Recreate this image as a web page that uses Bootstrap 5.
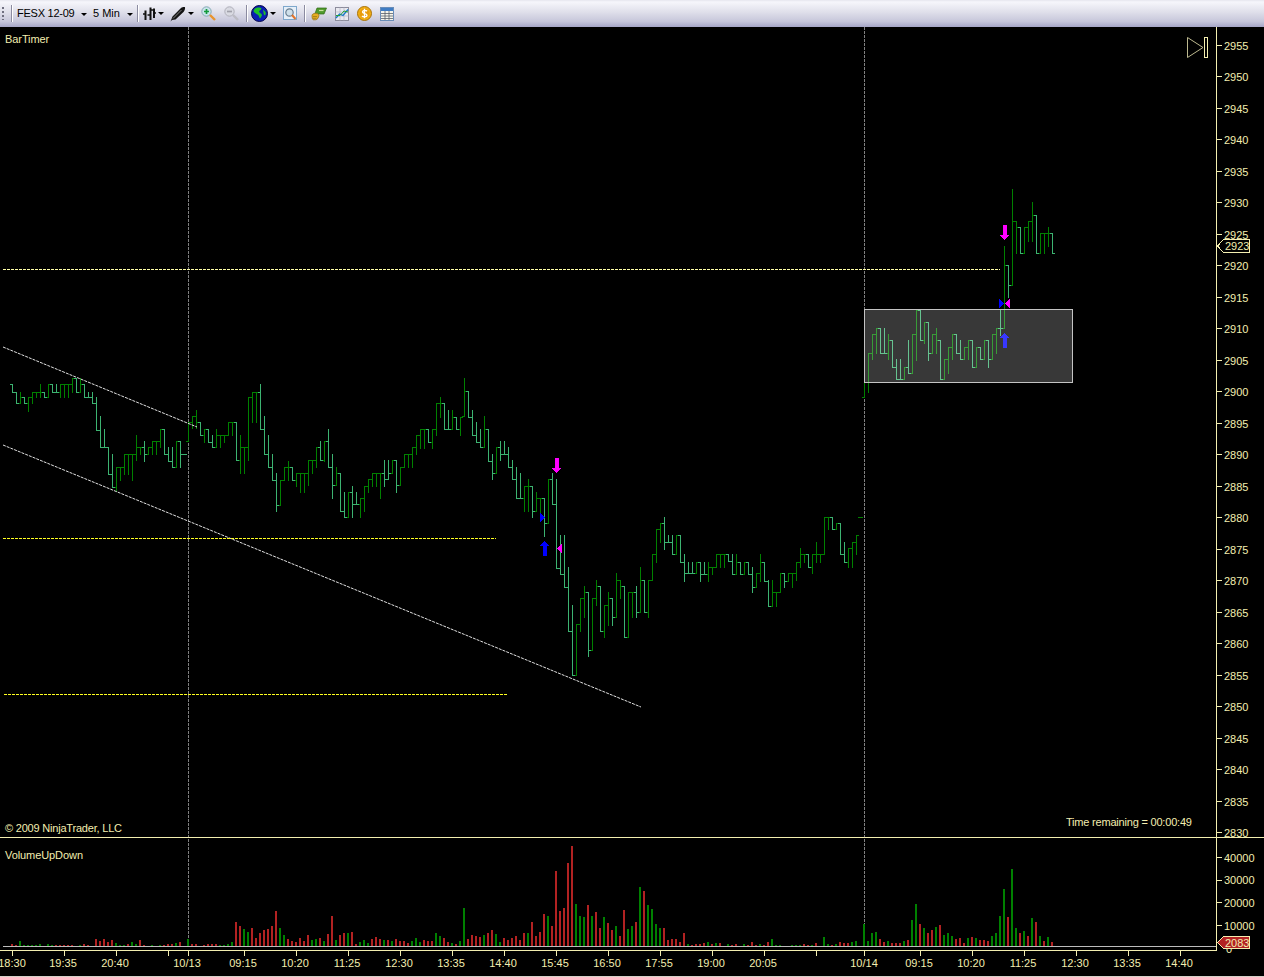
<!doctype html>
<html lang="en">
<head>
<meta charset="utf-8">
<title>FESX 12-09 chart</title>
<link href="https://cdn.jsdelivr.net/npm/bootstrap@5.3.0/dist/css/bootstrap.min.css" rel="stylesheet">
<style>
html,body{background:#000;height:977px;overflow:hidden;}
body{font-family:"Liberation Sans",Arial,sans-serif;}
.tbar{height:27px;padding:0;background:linear-gradient(#e6e6ee 0,#f6f6fb 2px,#dfdfea 45%,#c6c6da 80%,#a5a5c6 100%);flex-wrap:nowrap;justify-content:flex-start;font-size:11px;color:#000;}
.grip{width:2px;height:13px;margin-left:2px;background:repeating-linear-gradient(#6f6f80 0 2px,transparent 2px 4px);}
.tsep{width:1px;height:17px;background:#8b8ba0;border-right:1px solid #fff;box-sizing:content-box;}
.tsym{margin-left:4px;width:67px;white-space:nowrap;letter-spacing:-.25px;}
.tint{width:38px;white-space:nowrap;margin-left:9px;}
.tsym.dropdown-toggle::after,.tint.dropdown-toggle::after{margin-left:7px;vertical-align:1px;border-width:3px 3px 0 3px;}
.tcaret{width:0;height:0;border:3px solid transparent;border-top-color:#000;border-bottom:0;margin-left:2px;}
.tcaret.gap0{margin-left:1px;}
.tico{display:block;flex:none;}
.m2{margin-left:2px}.m3{margin-left:3px}.m4{margin-left:4px}.m5{margin-left:5px}.m6{margin-left:6px}.m7{margin-left:7px}.m8{margin-left:8px}
.chartbox{display:block;background:#000;}
.chartbox text{font-family:"Liberation Sans",Arial,sans-serif;font-size:11px;fill:#f3eeb0;}
.chartbox text.tight{letter-spacing:-.2px;}
.chartbox text.tight2{letter-spacing:-.08px;}
.foot{height:1px;background:#d4d0c8;}
</style>
</head>
<body>
<nav class="navbar d-flex align-items-center tbar">
  <span class="grip"></span>
  <span class="tsep m7"></span>
  <span class="tsym dropdown-toggle">FESX 12-09</span>
  <span class="tint dropdown-toggle">5 Min</span>
  <span class="tsep m6"></span>
  <svg class="tico m4" width="14" height="14" viewBox="0 0 14 14"><path d="M2.500 3.500V13M7.500 .5V13M11 1.500V11" stroke="#111" stroke-width="2" fill="none"/><path d="M0 7h3M4.500 8h3M7 3h3M10 6h3" stroke="#111" stroke-width="1.300" fill="none"/></svg>
  <span class="tcaret gap0"></span>
  <svg class="tico m6" width="16" height="16" viewBox="0 0 16 16"><path d="M.5 15.500 2.500 10.500 11 2c1.600-1.300 3.800-1.200 4-.8.400 1.500-.5 3.500-1.500 4.800L5.500 13.500 2 14Z" fill="#141414"/><path d="M3 12.500 11.500 4" stroke="#8a8a8a" stroke-width=".9"/></svg>
  <span class="tcaret"></span>
  <svg class="tico m7" width="16" height="16" viewBox="0 0 16 16"><circle cx="5.500" cy="5.500" r="4.700" fill="#c9e4ea" stroke="#86a8b6"/><path d="M3 5.500h5M5.500 3v5" stroke="#129a3c" stroke-width="1.700"/><path d="M9 9l5 5" stroke="#e8942e" stroke-width="2.400"/></svg>
  <svg class="tico m7" width="16" height="16" viewBox="0 0 16 16"><circle cx="5.500" cy="5.500" r="4.700" fill="#d9dae2" stroke="#b0b0ba"/><path d="M3 5.500h5" stroke="#a0a0aa" stroke-width="1.700"/><path d="M9 9l5 5" stroke="#bcbcc4" stroke-width="2.400"/></svg>
  <span class="tsep m6"></span>
  <svg class="tico m3" width="17" height="17" viewBox="0 0 17 17"><circle cx="8.500" cy="8.500" r="8" fill="#0a1fb4" stroke="#05054a"/><path d="M3.500 4C5.500 2 9 2 10.500 3.500c-.5 2-2 1.500-2.500 3 .5 2 2.500 1.500 3 3.500-.5 2-1.500 3-2 3.500-1-1.500-1-3-2.500-4C4.500 8.500 2.500 7 2.500 6ZM12 4.500l2.500 2.500c.5 1 0 3-.500 3.500-1-.5-1.500-1.500-1.500-3Z" fill="#1fc12a"/></svg>
  <span class="tcaret"></span>
  <svg class="tico m7" width="14" height="15" viewBox="0 0 14 15"><rect x=".5" y=".5" width="13" height="13" fill="#e6eff8" stroke="#7fa8cc"/><circle cx="6.500" cy="6.500" r="3.700" fill="#cfe0ea" stroke="#6a7f92" stroke-width="1.200"/><path d="M9 9l3.500 4" stroke="#e2752b" stroke-width="2"/></svg>
  <span class="tsep m7"></span>
  <svg class="tico m5" width="16" height="15" viewBox="0 0 16 15"><path d="M4 7.500 6 2h9.500L13 8H8Z" fill="#4f9a2c" stroke="#2f6a16" stroke-width=".7"/><path d="M8 4.500h4.500" stroke="#c9e29a" stroke-width="1.200"/><path d="M1 9.500c0-1.200 1.500-2.200 3.500-2.200h2l1.500 2c-.5 2.500-1.500 4.500-3.500 4.500H2.500C1.200 13.800 1 11 1 9.500Z" fill="#e5ad22" stroke="#8f6a0e" stroke-width=".7"/><path d="M2 10.500h4M2 12.300h3.500" stroke="#9a7410" stroke-width=".7"/></svg>
  <svg class="tico m8" width="14" height="14" viewBox="0 0 14 14"><rect x=".5" y=".5" width="13" height="13" fill="#e9e9f0" stroke="#8c8c9c"/><path d="M.5 5h13M.5 9h13M5 .5v13M9 .5v13" stroke="#b9b9c6" stroke-width=".7"/><path d="M1 11 4.500 7 8 8.500 13 2.500" stroke="#1778c8" stroke-width="1.300" fill="none"/><path d="M1 8.500 5 8.500 9 4 13 5" stroke="#25a038" fill="none"/></svg>
  <svg class="tico m8" width="15" height="15" viewBox="0 0 15 15"><circle cx="7.500" cy="7.500" r="7" fill="#f0ae14" stroke="#a9720a"/><circle cx="7.500" cy="7.500" r="4.900" fill="#e89c0c"/><path d="M10 5.200c-1-1.200-4.500-1.200-4.500.7S10 7.600 10 9.400 6 11.300 5 10M7.500 2.800v9.400" stroke="#fff" stroke-width="1.400" fill="none"/></svg>
  <svg class="tico m8" width="14" height="14" viewBox="0 0 14 14"><rect x=".5" y=".5" width="13" height="13" fill="#f7f6ec" stroke="#6a8db8"/><rect x="1" y="1" width="12" height="3" fill="#3f7cc4"/><path d="M1 6.500h12M1 9h12M1 11.500h12M5 4v9M9 4v9" stroke="#585f6a" stroke-width=".8"/></svg>
</nav>
<svg class="chartbox" id="chart" width="1264" height="949" viewBox="0 27 1264 949" xmlns="http://www.w3.org/2000/svg">
  <g id="grid" shape-rendering="crispEdges">
    <path d="M188.500 27V946M864.500 27V946" stroke="#808080" stroke-dasharray="3 1" fill="none"/>
  </g>
  <g id="bars" shape-rendering="crispEdges" fill="none"></g>
  <g id="marks" shape-rendering="crispEdges"></g>
  <rect x="864.500" y="309.500" width="208" height="73" fill="#fff" fill-opacity=".22" stroke="#c4c4c4" shape-rendering="crispEdges"/>
  <g fill="none" stroke-dasharray="3 1" stroke-width="1">
    <path d="M3 347 197 427M3 445 641 707" stroke="#e0e0e0"/>
    <path d="M3 538.500H496M4 694.500H507" stroke="#ffff20" shape-rendering="crispEdges"/>
    <path d="M3 269.500H1000" stroke="#ffffa8" shape-rendering="crispEdges"/>
  </g>
  <g id="vol" shape-rendering="crispEdges"></g>
  <g fill="none" stroke="#f3eeb0" shape-rendering="crispEdges">
    <path d="M1216.500 27V950.500M0 837.500H1264M0 950.500H1216.500"/>
    <path d="M1217 45.500h5M1217 76.500h5M1217 108.500h5M1217 139.500h5M1217 171.500h5M1217 202.500h5M1217 234.500h5M1217 265.500h5M1217 297.500h5M1217 328.500h5M1217 360.500h5M1217 391.500h5M1217 423.500h5M1217 454.500h5M1217 486.500h5M1217 517.500h5M1217 549.500h5M1217 580.500h5M1217 612.500h5M1217 643.500h5M1217 675.500h5M1217 706.500h5M1217 738.500h5M1217 769.500h5M1217 801.500h5M1217 832.500h5"/>
    <path d="M1217 857.500h5M1217 880.500h5M1217 902.500h5M1217 925.500h5"/>
    <path d="M12.500 950v6M64.500 950v6M116.500 950v6M168.500 950v6M188.500 950v6M244.500 950v6M296.500 950v6M348.500 950v6M400.500 950v6M452.500 950v6M504.500 950v6M556.500 950v6M608.500 950v6M660.500 950v6M712.500 950v6M764.500 950v6M816.500 950v6M864.500 950v6M920.500 950v6M972.500 950v6M1024.500 950v6M1076.500 950v6M1128.500 950v6M1180.500 950v6"/>
  </g>
  <path d="M3 946.500H1216" stroke="#bcbcbc" shape-rendering="crispEdges"/>
  <text x="5" y="43" class="tight2">BarTimer</text>
  <text x="5" y="832" class="tight">© 2009 NinjaTrader, LLC</text>
  <text x="5" y="859" class="tight2">VolumeUpDown</text>
  <text x="1066" y="826" class="tight">Time remaining = 00:00:49</text>
  <path d="M1187.500 37.500V57.500L1203 47.500Z" fill="none" stroke="#bdb98f"/>
  <rect x="1204.500" y="37.500" width="3" height="19.500" fill="none" stroke="#f3eeb0" shape-rendering="crispEdges"/>
  <g id="ylab">
    <text x="1224" y="50">2955</text><text x="1224" y="81">2950</text><text x="1224" y="113">2945</text><text x="1224" y="144">2940</text><text x="1224" y="176">2935</text><text x="1224" y="207">2930</text><text x="1224" y="239">2925</text><text x="1224" y="270">2920</text><text x="1224" y="302">2915</text><text x="1224" y="333">2910</text><text x="1224" y="365">2905</text><text x="1224" y="396">2900</text><text x="1224" y="428">2895</text><text x="1224" y="459">2890</text><text x="1224" y="491">2885</text><text x="1224" y="522">2880</text><text x="1224" y="554">2875</text><text x="1224" y="585">2870</text><text x="1224" y="617">2865</text><text x="1224" y="648">2860</text><text x="1224" y="680">2855</text><text x="1224" y="711">2850</text><text x="1224" y="743">2845</text><text x="1224" y="774">2840</text><text x="1224" y="806">2835</text><text x="1224" y="837">2830</text>
    <text x="1224" y="862">40000</text><text x="1224" y="884">30000</text><text x="1224" y="907">20000</text><text x="1224" y="930">10000</text><text x="1226" y="953">0</text>
  </g>
  <path d="M1217.500 246 1223.500 239.500H1249.500V252.500H1223.500Z" fill="#000" stroke="#f3eeb0" shape-rendering="crispEdges"/>
  <text x="1225" y="250">2923</text>
  <path d="M1217.500 942.500 1223.500 936.500H1249.500V948.500H1223.500Z" fill="#b22222" stroke="#f3eeb0" shape-rendering="crispEdges"/>
  <text x="1225" y="947">2083</text>
  <g id="xlab" text-anchor="middle">
    <text x="12" y="967">18:30</text><text x="63" y="967">19:35</text><text x="115" y="967">20:40</text><text x="187" y="967">10/13</text><text x="243" y="967">09:15</text><text x="295" y="967">10:20</text><text x="347" y="967">11:25</text><text x="399" y="967">12:30</text><text x="451" y="967">13:35</text><text x="503" y="967">14:40</text><text x="555" y="967">15:45</text><text x="607" y="967">16:50</text><text x="659" y="967">17:55</text><text x="711" y="967">19:00</text><text x="763" y="967">20:05</text><text x="864" y="967">10/14</text><text x="919" y="967">09:15</text><text x="971" y="967">10:20</text><text x="1023" y="967">11:25</text><text x="1075" y="967">12:30</text><text x="1127" y="967">13:35</text><text x="1179" y="967">14:40</text>
  </g>
</svg>
<div class="foot"></div>
<script src="https://cdn.jsdelivr.net/npm/bootstrap@5.3.0/dist/js/bootstrap.bundle.min.js"></script>
<script>
var groups=[
 {x:12,oy:340,d:"133 155 l,155 190 l,155 190 d,172 190 l,172 212 d,155 190 d,155 172 d,133 172 d,155 172 l,133 172 d,133 155 l,133 155 l,133 172 d,133 172 d,133 172 d,115 155 d,115 155 l,115 155 d,133 172 l,155 172 l,155 190 l,172 270 l,228 322 l,268 322 l,322 402 l,343 440 l,380 452 d,380 420 d,343 402 d,343 402 d,343 420 d,285 360 d,322 343 d,303 362 l,322 343 d,303 343 d,303 343 d,268 322 d,268 343 l,322 362 l,322 380 l,303 380 d,303 380 l,343 343 l,247 303 d,228 265 d,210 265 d,247 285 l,268 305 d,268 305 l,285 322 l,268 322 d,285 322 d,285 305 d,247 285 d,247 285 d,247 360 l,285 400 d,322 400 d,172 360 d,155 247 d,155 247 d,133 268 l,228 343 l,285 380 l,343 420 l,400 512 l,420 495 d,380 420 d,362 420 d,380 420 l,400 437 d"},
 {x:300,oy:370,d:"310 365 d,310 365 d,270 345 d,270 310 d,232 290 d,213 270 l,213 272 d,178 290 l,253 385 l,290 345 d,310 422 l,365 442 l,365 442 d,347 442 l,365 403 l,385 442 d,347 422 d,328 365 d,310 347 d,310 347 d,310 385 d,270 347 l,270 328 l,270 310 d,270 365 l,290 345 d,252 290 d,252 290 d,232 290 d,195 252 d,178 233 d,178 233 d,178 215 l,178 233 d,100 195 d,82 140 d,100 178 l,120 178 l,120 178 d,140 178 l,140 195 d,25 138 d,63 140 l,120 195 l,157 215 l,178 232 l,138 232 d,178 272 l,253 328 l,232 310 d,213 270 l,213 252 l,232 290 l,270 328 l,290 385 l,310 385 l,347 422 d,328 422 d,347 442 l,365 422 d,385 442 d,385 497 l,328 460 d,310 403 l"},
 {x:556,oy:500,d:"-62 205 l,105 222 l,105 260 l,200 392 l,315 525 l,372 525 d,295 392 d,258 352 d,277 467 l,295 450 d,240 315 d,258 392 l,315 410 d,277 375 d,295 375 l,220 352 d,240 295 d,258 410 l,277 410 d,277 352 d,258 352 l,202 335 d,240 335 l,240 352 d,163 240 d,88 185 d,70 127 d,52 147 l,105 127 l,105 163 l,105 163 d,105 185 l,163 242 l,185 220 l,185 220 l,185 220 d,185 242 l,185 222 l,185 242 d,202 222 d,163 202 d,163 202 d,163 202 d,163 182 l,163 222 l,163 222 d,185 222 l,185 222 d,185 222 l,202 277 l,220 260 d,163 242 d,185 242 l,240 317 l,240 317 d,277 317 d,220 277 d,220 260 l,220 242 d,220 260 d,185 240 d,145 202 d,163 185 d,163 202 l,163 220 d,127 185 d,163 185 d,52 163 d,52 88 d,52 88 l,70 88 d,70 163 l,127 185 l,145 202 d,127 202 d,105 163 d,52 52 d"},
 {x:864,oy:180,d:"605 652 d,520 635 d,462 538 d,445 520 d,445 520 l,445 520 l,462 538 d,480 560 l,538 597 l,538 597 l,560 597 d,480 578 l,462 578 d,390 540 d,390 480 l,425 488 d,425 540 l,462 520 d,445 520 d,480 597 l,538 597 d,502 578 d,462 538 d,462 520 l,480 538 l,502 538 d,480 538 d,480 560 l,502 560 d,502 538 l,480 538 d,480 560 l,462 538 d,445 520 d,390 465 l,198 445 d,255 350 l,28 315 d,123 218 d,140 218 l,140 218 d,123 182 d,65 182 d,105 218 l,160 218 d,160 218 d,140 198 d,160 218 l"}
];
var bars=[];
groups.forEach(function(g){
  g.d.split(",").forEach(function(s,i){
    var p=s.split(" ");
    bars.push({x:g.x+i*4,t:Math.round(g.oy+p[0]/3),b:Math.round(g.oy+p[1]/3),k:p[2]});
  });
});
function clamp(v,a,b){return Math.max(a,Math.min(b,v));}
var paths={d:"",l:""},prev=null;
bars.forEach(function(c,i){
  var n=bars[i+1]&&bars[i+1].x-c.x===4?bars[i+1]:c;
  var close=c.k==="d"?clamp(Math.max(c.t,n.t),c.t,c.b):clamp(Math.min(c.b,n.b),c.t,c.b);
  var open=prev!==null?clamp(prev,c.t,c.b):(c.k==="d"?c.b:c.t);
  paths[c.k]+="M"+(c.x+.5)+" "+c.t+"V"+(c.b+1)+"M"+(c.x-2)+" "+(open+.5)+"H"+c.x+"M"+(c.x+1)+" "+(close+.5)+"H"+(c.x+3);
  prev=close;
});
var ns="http://www.w3.org/2000/svg";
function el(parent,name,attrs){var e=document.createElementNS(ns,name);for(var k in attrs)e.setAttribute(k,attrs[k]);parent.appendChild(e);return e;}
var gb=document.getElementById("bars");
el(gb,"path",{d:paths.d,stroke:"#008000"});
el(gb,"path",{d:paths.l,stroke:"#3cb371"});
var gm=document.getElementById("marks");
function down(cx,y){return "M"+(cx-2)+" "+y+"H"+(cx+2)+"V"+(y+10)+"H"+(cx+4.5)+"L"+cx+" "+(y+15)+"L"+(cx-4.5)+" "+(y+10)+"H"+(cx-2)+"Z";}
function up(cx,y){return "M"+(cx-2)+" "+(y+15)+"H"+(cx+2)+"V"+(y+5)+"H"+(cx+4.5)+"L"+cx+" "+y+"L"+(cx-4.5)+" "+(y+5)+"H"+(cx-2)+"Z";}
el(gm,"path",{d:down(556.5,458)+down(1004.5,225),fill:"#ff00ff"});
el(gm,"path",{d:up(544.5,541)+up(1004.5,333),fill:"#0000ff"});
el(gm,"path",{d:"M540 513 545 517.500 540 522ZM999 299 1004 303.500 999 308Z",fill:"#0000ff"});
el(gm,"path",{d:"M562 544 557 548.500 562 553ZM1010 299 1005 303.500 1010 308Z",fill:"#ff00ff"});
var vols=[
 {x:12,b:408,d:"402r 405r 393g 405g 405g 405g 405g 402g - 402g 405g 405r 405r 405r 405r 405r - 405g 402r 405r - 387r 393r 387r 396r 390r 399g 405g 405g 402r 396g 402g 390r 405r - 405g - 405g 405r 402r 402r 399g 396r - 387g 402r 402r - 405r 402r 402r 402r 405g 405g 402g 396g 336r 348r 357g 366g 354r 384r 369r 360r 357r 348r 303r 354g 375g 387r 393r 396r 384r 393r 375r 390g 387g 384r 393g 372r 318r 390g 375r 369r 369g 366r 402r 396g 390g 399g 387r 381r 387r 390g 390r 393g 387r 393r 393r 399r 393g 384g"},
 {x:420,b:348,d:"336g 330r 333r 333r 309g 318g 324r 336r 339g 342r 333g 234g 327r 315r 318r 321r 315g 309r 300r 312g 336g 324r 330r 324r 318r 330r 309r 309g 276r 318r 306r 252r 258g 288r 123r 243r 234r 99r 48r 222g 258g 261g 225r 258g 246r 294r 261g 279r 300r 288g 318r 240r 297g 288g 276r 171g 183r 225g 237g 282g 294g 294r 330r 327r 327r 336r 309r 342g 345r 342r 342r 339r 336g 342r 339g 339r - 342g 345r 342r - 342g 345r 336r 345r 342g 345r 336r 327g 345g 345g - - 345g 345g 345g 342r 345r 345g 339r - 321g 342g 345r 342g"},
 {x:840,b:408,d:"396r 399r 399r 396g 393g - 342g 393g 369g 366g 387r 396r 393g 399r 399r 399r 393g 390r 330g 282g 342r 354g 369r 360r 351g 345r 375g 369g 378g 387r 384r 399r 384g 381r 384g 390r 390r 393r 378g 369g 318g 237g 321r 177g 354g 369r 363g 378r 324g 336r 378g 393r 381g 396r"}
];
var gv=document.getElementById("vol"),rd="",gn="";
vols.forEach(function(v){
  v.d.split(" ").forEach(function(s,i){
    if(s==="-")return;
    var x=v.x+i*4,h=Math.round((v.b-parseInt(s,10))/3),y=946-h;
    var p="M"+(x-1)+" "+y+"h2v"+h+"h-2Z";
    if(s.slice(-1)==="r")rd+=p;else gn+=p;
  });
});
el(gv,"path",{d:rd,fill:"#b22222"});
el(gv,"path",{d:gn,fill:"#008000"});
</script>
</body>
</html>
